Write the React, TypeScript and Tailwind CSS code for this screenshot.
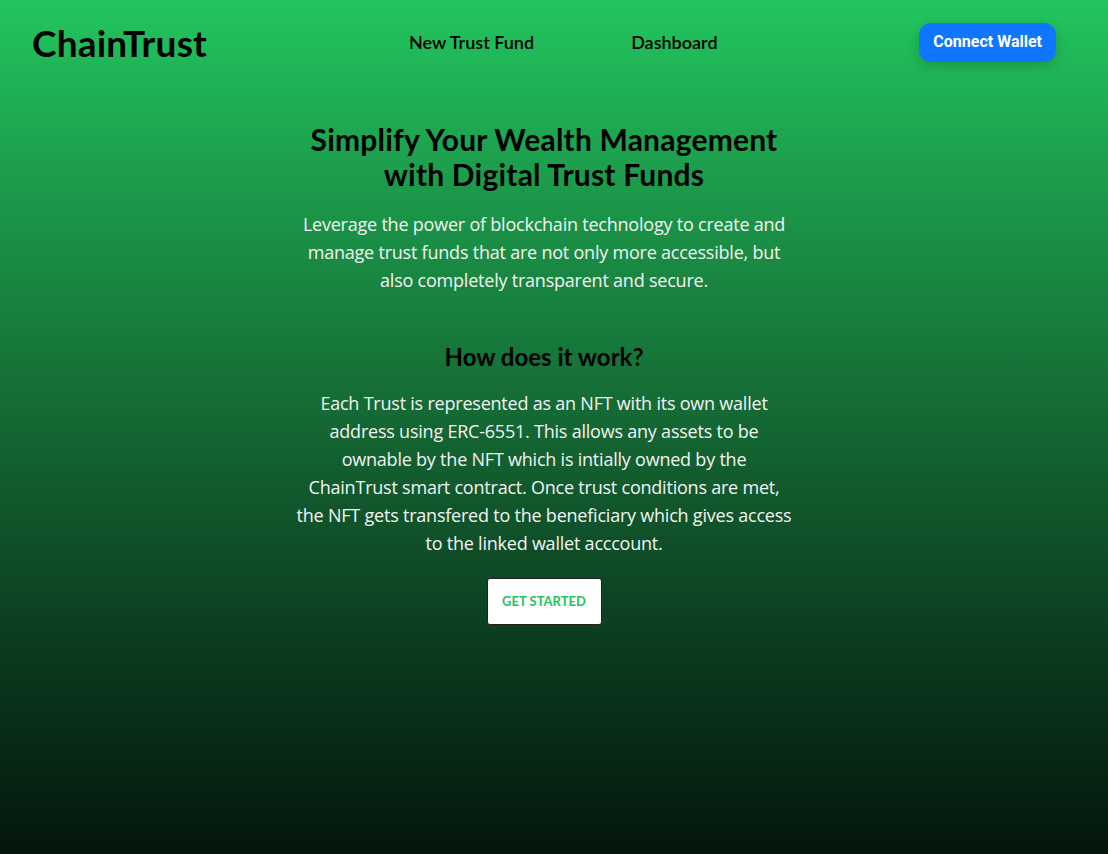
const App = () => {
  return (
    <div className="min-h-[854px] bg-gradient-to-b from-[#22c55e] to-[#04160c] font-['Lato','Open_Sans',sans-serif]">
      <header className="flex h-[84px] items-center justify-between pl-8 pr-[52px]">
        <a href="#" className="text-[37px] font-bold leading-none tracking-[0.2px] text-black">
          ChainTrust
        </a>
        <nav className="flex items-center gap-[97px] text-[18px] font-semibold text-black">
          <a href="#">New Trust Fund</a>
          <a href="#">Dashboard</a>
        </nav>
        <button className="h-[39px] rounded-xl bg-[#0f76ff] px-[14px] font-['Roboto',sans-serif] text-[16px] font-bold text-white shadow-[0_4px_12px_rgba(0,0,0,0.18)]">
          Connect Wallet
        </button>
      </header>

      <main className="flex flex-col items-center pr-5 text-center">
        <h1 className="mt-[38px] max-w-[500px] text-[30px] font-bold leading-[35px] tracking-[0.2px] text-black">
          Simplify Your Wealth Management with Digital Trust Funds
        </h1>
        <p className="mt-[18px] max-w-[500px] font-['Open_Sans',sans-serif] text-[18px] leading-[28px] tracking-[-0.22px] text-[#f3f3f3]">
          Leverage the power of blockchain technology to create and manage trust
          funds that are not only more accessible, but also completely
          transparent and secure.
        </p>

        <h2 className="mt-[47px] text-[24px] font-bold leading-[32px] text-black">
          How does it work?
        </h2>
        <p className="mt-[16px] max-w-[496px] font-['Open_Sans',sans-serif] text-[18px] leading-[28px] tracking-[-0.22px] text-[#f3f3f3]">
          Each Trust is represented as an NFT with its own wallet address using
          ERC-6551. This allows any assets to be ownable by the NFT which is
          intially owned by the ChainTrust smart contract. Once trust conditions
          are met, the NFT gets transfered to the beneficiary which gives access
          to the linked wallet acccount.
        </p>
        <button className="mt-[21px] h-[47px] w-[115px] rounded-[3px] border border-[#222] bg-white text-[13px] font-bold uppercase text-[#22c55e]">
          Get Started
        </button>
      </main>
    </div>
  );
};

export default App;
